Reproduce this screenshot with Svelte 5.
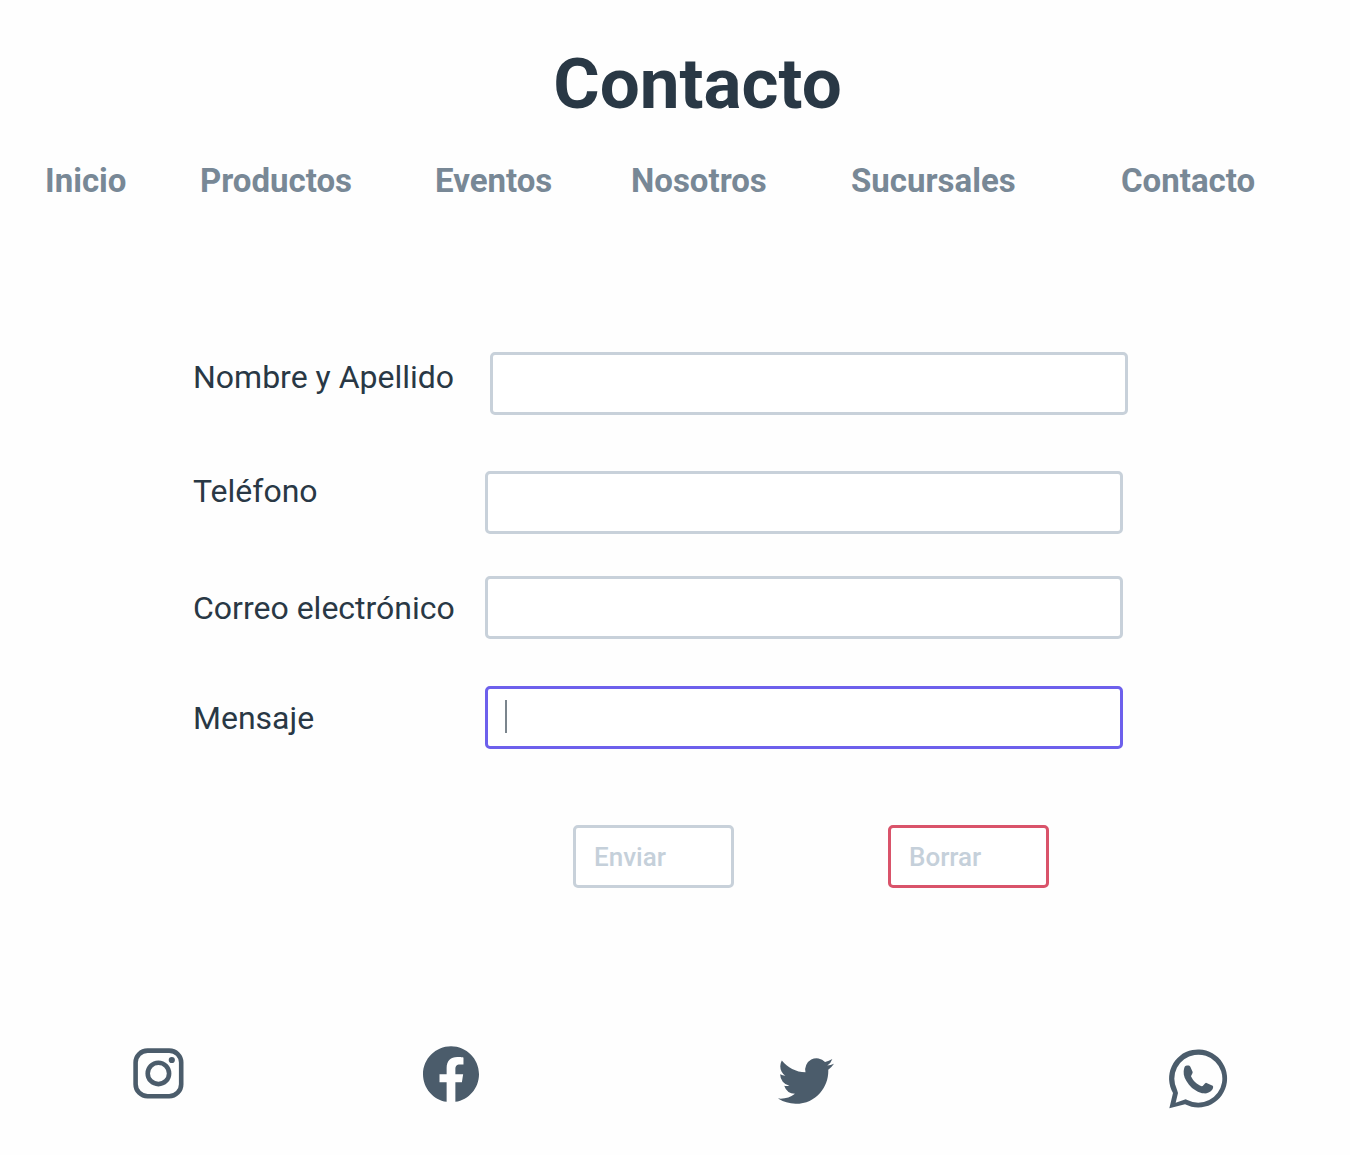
<script>
  const links = ['Inicio', 'Productos', 'Eventos', 'Nosotros', 'Sucursales', 'Contacto'];
  let name = $state('');
  let phone = $state('');
  let email = $state('');
  let message = $state('');
</script>

<div class="page">
  <header>
    <h1>Contacto</h1>
    <nav aria-label="Principal">
      {#each links as link}
        <a href="#{link.toLowerCase()}">{link}</a>
      {/each}
    </nav>
  </header>

  <main>
    <form onsubmit={(e) => e.preventDefault()}>
      <div class="row name">
        <label for="name">Nombre y Apellido</label>
        <input id="name" type="text" bind:value={name} />
      </div>
      <div class="row phone">
        <label for="phone">Teléfono</label>
        <input id="phone" type="tel" bind:value={phone} />
      </div>
      <div class="row email">
        <label for="email">Correo electrónico</label>
        <input id="email" type="email" bind:value={email} />
      </div>
      <div class="row">
        <label for="message">Mensaje</label>
        <div class="active">
          <textarea id="message" rows="1" bind:value={message}></textarea>
          <span class="caret"></span>
        </div>
      </div>
      <div class="actions">
        <button type="submit">Enviar</button>
        <button type="reset" class="danger">Borrar</button>
      </div>
    </form>
  </main>

  <footer>
    <a href="#instagram" aria-label="Instagram">
      <svg class="icon" viewBox="0 0 56 56" fill="none" stroke="currentColor" stroke-width="4.6">
        <rect x="4.6" y="4.6" width="45.6" height="45.6" rx="12" />
        <circle cx="27.4" cy="27.4" r="10.7" />
        <circle cx="40.8" cy="14" r="3.1" fill="currentColor" stroke="none" />
      </svg>
    </a>
    <a href="#facebook" aria-label="Facebook">
      <svg class="icon" viewBox="0 0 24 24" fill="currentColor">
        <path d="M24 12.073c0-6.627-5.373-12-12-12s-12 5.373-12 12c0 5.99 4.388 10.954 10.125 11.854v-8.385H7.078v-3.47h3.047V9.43c0-3.007 1.792-4.669 4.533-4.669 1.312 0 2.686.235 2.686.235v2.953H15.83c-1.491 0-1.956.925-1.956 1.874v2.25h3.328l-.532 3.47h-2.796v8.385C19.612 23.027 24 18.062 24 12.073z" />
      </svg>
    </a>
    <a href="#twitter" aria-label="Twitter" class="low">
      <svg class="icon" viewBox="0 0 24 24" fill="currentColor">
        <path d="M23.953 4.57a10 10 0 01-2.825.775 4.958 4.958 0 002.163-2.723c-.951.555-2.005.959-3.127 1.184a4.92 4.92 0 00-8.384 4.482C7.69 8.095 4.067 6.13 1.64 3.162a4.822 4.822 0 00-.666 2.475c0 1.71.87 3.213 2.188 4.096a4.904 4.904 0 01-2.228-.616v.06a4.923 4.923 0 003.946 4.827 4.996 4.996 0 01-2.212.085 4.936 4.936 0 004.604 3.417 9.867 9.867 0 01-6.102 2.105c-.39 0-.779-.023-1.17-.067a13.995 13.995 0 007.557 2.209c9.053 0 13.998-7.496 13.998-13.985 0-.21 0-.42-.015-.63A9.935 9.935 0 0024 4.59z" />
      </svg>
    </a>
    <a href="#whatsapp" aria-label="WhatsApp" class="low">
      <svg class="icon large" viewBox="0 0 180 178" fill="currentColor">
        <path fill-rule="evenodd" d="M1 177L12 131A87 87 0 1 1 48 165ZM20 160L50 150L55 152A72 72 0 1 0 24 121L27 131Z" />
        <path d="M49 50C58 47 62 49 64 52L71 68C72 72 66 78 66 81C72 94 84 106 98 111C102 111 107 101 111 100L131 109C134 111 132 118 129 122C123 130 111 133 105 132C90 131 70 119 60 106C48 91 43 79 44 66C45 58 46 52 49 50Z" />
      </svg>
    </a>
  </footer>
</div>

<style>
  :global(body) {
    background: #fefefe;
  }
  .page {
    font-family: Roboto, 'Liberation Sans', sans-serif;
    color: #293845;
    padding-bottom: 44px;
  }
  h1 {
    margin: 0;
    padding: 44px 0 0 45px;
    font-size: 71px;
    line-height: 80px;
    font-weight: 700;
    text-align: center;
  }
  nav {
    display: grid;
    grid-template-columns: 155fr 235fr 196fr 220fr 270fr 229fr;
    padding: 37px 0 0 45px;
  }
  nav a {
    color: #788896;
    font-size: 33px;
    line-height: 40px;
    font-weight: 700;
    text-decoration: none;
    justify-self: start;
  }
  form {
    padding: 151px 222px 0 193px;
  }
  .row {
    display: grid;
    grid-template-columns: 292px 638fr 5fr;
    align-items: start;
  }
  label {
    font-size: 32px;
    line-height: 64px;
  }
  .name {
    grid-template-columns: 297px 1fr;
    margin-bottom: 56px;
  }
  .name label {
    line-height: 50px;
  }
  .phone {
    margin-bottom: 42px;
  }
  .phone label {
    line-height: 40px;
  }
  .email {
    margin-bottom: 46px;
  }
  input,
  textarea,
  button {
    box-sizing: border-box;
    height: 63px;
    border: 3px solid #c8d1da;
    border-radius: 5px;
    background: #fff;
    font-family: inherit;
    font-size: 26px;
    color: inherit;
    outline: none;
  }
  input,
  textarea {
    display: block;
    width: 100%;
    margin: 0;
    padding: 12px 18px;
  }
  .active {
    position: relative;
  }
  textarea {
    border-color: #6d60ec;
    resize: none;
    overflow: hidden;
  }
  .caret {
    position: absolute;
    left: 20px;
    top: 14px;
    width: 2px;
    height: 33px;
    background: #7b858d;
  }
  .actions {
    display: flex;
    gap: 154px;
    padding: 75px 0 0 380px;
  }
  button {
    flex: none;
    width: 161px;
    padding: 0 18px;
    color: #c5d0da;
    font-weight: 500;
    text-align: left;
  }
  .danger {
    border-color: #d9536a;
  }
  footer {
    display: grid;
    grid-template-columns: 292fr 355fr 391fr 181fr;
    grid-auto-rows: 63px;
    align-items: start;
    padding: 158px 0 0 131px;
  }
  footer a {
    justify-self: start;
    color: #4b5c6b;
  }
  .low {
    align-self: end;
  }
  .icon {
    display: block;
    width: 56px;
    height: 56px;
  }
  .large {
    width: 60px;
    height: 60px;
  }
</style>
